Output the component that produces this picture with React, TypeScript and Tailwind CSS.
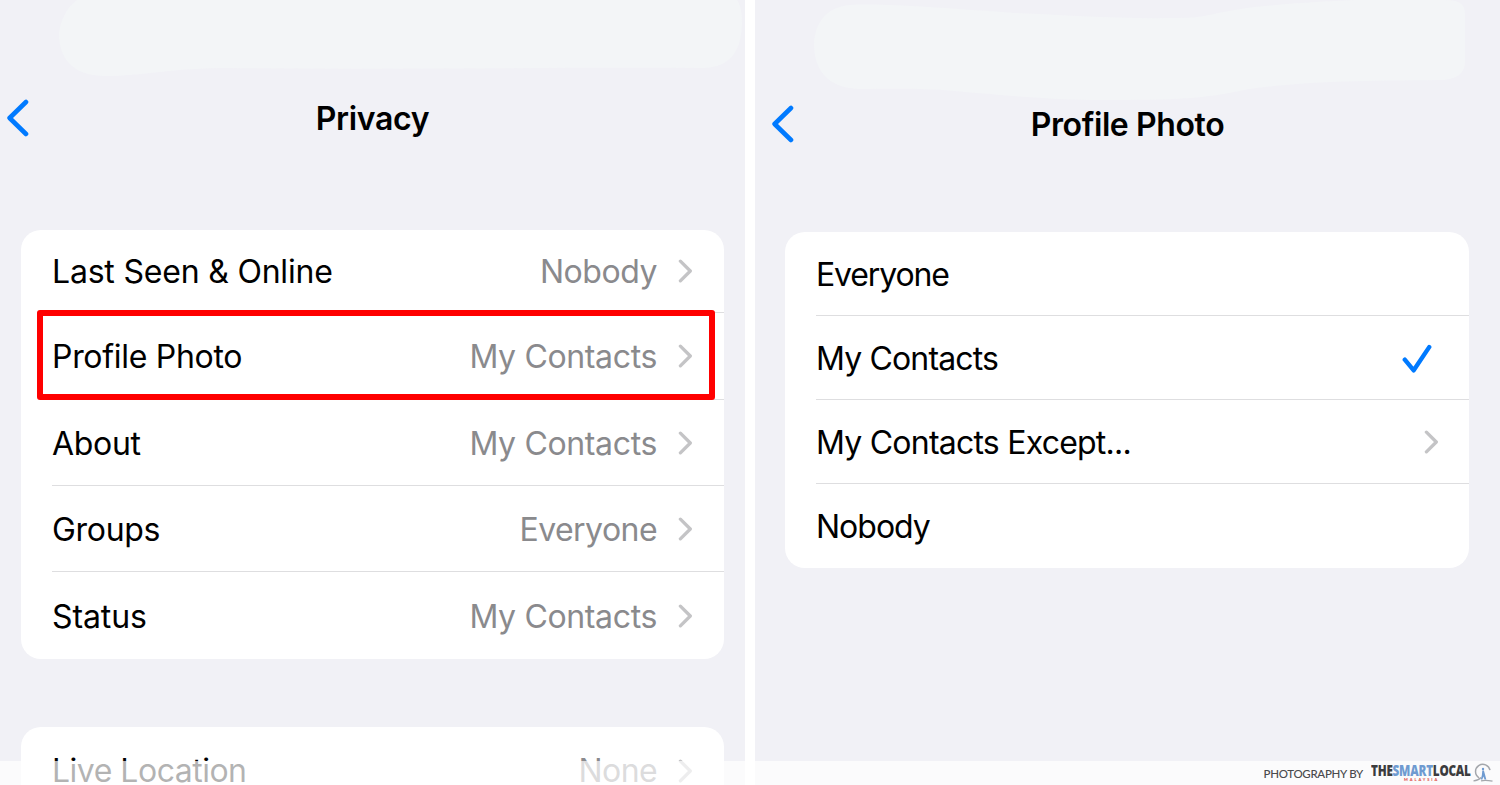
import React from "react";
import { clsx } from "clsx";

const privacyRows = [
    { label: "Last Seen & Online", value: "Nobody", rowClass: "h-[82px]", labelClass: "pt-0.5 tracking-[-0.2px]", valueClass: "pt-0.5 tracking-[-0.45px]" },
    { label: "Profile Photo", value: "My Contacts", rowClass: "h-[87px] border-t", labelClass: "pt-0.5", valueClass: "pt-0.5 tracking-[-0.35px]" },
    { label: "About", value: "My Contacts", rowClass: "h-[86px] border-t", labelClass: "pt-0.5", valueClass: "pt-0.5 tracking-[-0.35px]" },
    { label: "Groups", value: "Everyone", rowClass: "h-[86px] border-t pt-px", labelClass: "pt-0.5", valueClass: "pt-0.5 tracking-[-0.55px]" },
    { label: "Status", value: "My Contacts", rowClass: "h-[88px] border-t", labelClass: "pt-0.5 tracking-[-0.1px]", valueClass: "pt-0.5 tracking-[-0.35px]" },
];

const photoOptions = [
    { label: "Everyone", rowClass: "h-[83px]", labelClass: "pt-0.5 tracking-[-1.15px]" },
    { label: "My Contacts", rowClass: "h-[84px] border-t", labelClass: "pt-0.5 tracking-[-0.85px]", checked: true },
    { label: "My Contacts Except...", rowClass: "h-[84px] border-t", labelClass: "pt-0.5 tracking-[-0.77px]", more: true },
    { label: "Nobody", rowClass: "h-[85px] border-t", labelClass: "pt-0.5 tracking-[-1px]" },
];

function BackIcon() {
    return (
        <svg className="h-[38px] w-6 shrink-0" viewBox="0 0 24 38" fill="none" stroke="#007aff" strokeWidth="4.6" strokeLinecap="round" strokeLinejoin="round">
            <path d="M21 3 4.6 19 21 35" />
        </svg>
    );
}

function Chevron() {
    return (
        <svg className="h-6 w-[15px] shrink-0" viewBox="0 0 15 24" fill="none" stroke="#c4c4c6" strokeWidth="3.3" strokeLinecap="round" strokeLinejoin="round">
            <path d="M2.4 2.2 12.3 12l-9.9 9.8" />
        </svg>
    );
}

function CheckIcon() {
    return (
        <svg className="h-[30px] w-[30px] shrink-0" viewBox="0 0 30 30" fill="none" stroke="#007aff" strokeWidth="4.4" strokeLinecap="round" strokeLinejoin="round">
            <path d="M2.8 16.7 11.7 27.3 27.2 4.1" />
        </svg>
    );
}

type SettingRowProps = {
    label: string;
    value: string;
    rowClass: string;
    labelClass?: string;
    valueClass?: string;
};

function SettingRow({ label, value, rowClass, labelClass, valueClass }: SettingRowProps) {
    return (
        <div className={clsx("ml-[31px] flex items-center border-[#dedee0] pr-[31px]", rowClass)}>
            <span className={clsx("grow text-black", labelClass)}>{label}</span>
            <span className={clsx("mr-[21px] text-[#8a8a8d]", valueClass)}>{value}</span>
            <Chevron />
        </div>
    );
}

function PrivacyScreen() {
    return (
        <section className="relative flex w-[745px] flex-col overflow-hidden bg-[#f1f1f6]">
            {/* Smudge over the status bar */}
            <svg className="absolute top-0 left-0 h-[80px] w-full" viewBox="0 0 745 80">
                <path d="M77 0C66 8 60 22 59 34c0 22 12 42 46 42 38 0 66-8 125-8 160 2 320-1 474 0 24-1 37-14 38-44 0-10-1-18-5-24z" fill="#f3f5f7" />
            </svg>
            <header className="relative flex h-[230px] shrink-0 items-start pt-[99px] pl-[5px]">
                <BackIcon />
                <h1 className="absolute inset-x-0 top-[99px] text-center text-[32px] leading-10 font-semibold tracking-[-0.3px]">Privacy</h1>
            </header>
            <div className="relative mx-[21px] rounded-[20px] bg-white">
                {privacyRows.map((row) => (
                    <SettingRow key={row.label} {...row} />
                ))}
                <div className="absolute top-[80px] left-4 h-[90px] w-[678px] rounded-[3px] border-6 border-[#ff0000]" />
            </div>
            <div className="mx-[21px] mt-[68px] rounded-t-[20px] bg-white">
                <SettingRow label="Live Location" value="None" rowClass="h-[87px]" labelClass="tracking-[-0.5px]" valueClass="tracking-[-0.6px]" />
            </div>
        </section>
    );
}

function ProfilePhotoScreen() {
    return (
        <section className="relative flex w-[745px] flex-col overflow-hidden bg-[#f1f1f6]">
            <svg className="absolute top-0 left-0 h-[105px] w-full" viewBox="0 0 745 105">
                <path d="M95 5C70 7 60 24 59 44c0 26 14 44 45 45 30 0 65-1 95 2 60 5 100 9 150 9 70 0 100-1 145-11 60-8 105-8 190-9 18 0 26-7 26-18V14c0-10-6-14-20-14H600c-60 3-90 5-120 10-30 5-30 8-60 8-60 1-110-3-160-5C200 9 130 3 95 5z" fill="#f3f5f7" />
            </svg>
            <header className="relative flex h-[232px] shrink-0 items-start pt-[105px] pl-[15px]">
                <BackIcon />
                <h1 className="absolute inset-x-0 top-[105px] text-center text-[32px] leading-10 font-semibold tracking-[-0.4px]">Profile Photo</h1>
            </header>
            <div className="mr-[31px] ml-[30px] rounded-[20px] bg-white">
                {photoOptions.map((option) => (
                    <div key={option.label} className={clsx("ml-[31px] flex items-center border-[#dedee0]", option.rowClass)}>
                        <span className={clsx("grow text-black", option.labelClass)}>{option.label}</span>
                        {option.checked && <span className="mr-[37px] flex pt-px"><CheckIcon /></span>}
                        {option.more && <span className="mr-[30px] flex"><Chevron /></span>}
                    </div>
                ))}
            </div>
        </section>
    );
}

function CreditBar() {
    return (
        <footer className="absolute inset-x-0 bottom-0 flex h-6 items-start justify-end bg-white/70 pr-[7px]">
            <span className="mt-[5px] mr-2 font-['Lato',sans-serif] text-[11.5px] leading-4 font-medium tracking-[-0.3px] whitespace-nowrap text-[#4a4a4c]">PHOTOGRAPHY BY</span>
            <div className="mt-[3px] flex w-[99px] flex-col">
                <div className="h-[13px] origin-left scale-x-[0.78] font-['Open_Sans',sans-serif] text-[15px] leading-[13px] font-extrabold tracking-[-0.3px] whitespace-nowrap text-[#3c3c3e]">
                    THE<span className="text-[#6f9bd1]">SMART</span>LOCAL
                </div>
                <div className="pl-[33px] font-['Lato',sans-serif] text-[4px] leading-[5px] font-black tracking-[1.9px] text-[#e0524d]">MALAYSIA</div>
            </div>
            <svg className="mt-[2px] ml-[3px] h-[21px] w-5" viewBox="0 0 20 21" fill="none">
                <path d="M6 14.8A7.3 7.3 0 1 1 17 7.200" stroke="#a4a7ac" strokeWidth="1.5" />
                <path d="M.5 17.8c3.5-.2 5.500-1 7.500-3.300M8 17.800c3-.8 7-.6 11.500.4" stroke="#a4a7ac" strokeWidth="1.2" />
                <path d="M9.300 7.500h1.600l1.100 4 1.300 5h-1.700l-1.300-3-.9 3H7.800l1.100-4.500z" fill="#6f9bd1" />
                <circle cx="10" cy="6" r="1.2" fill="#6f9bd1" />
            </svg>
        </footer>
    );
}

export default function App() {
    return (
        <main className="relative flex h-[785px] w-[1500px] gap-2.5 overflow-hidden bg-white font-['Inter',sans-serif] text-[32px] leading-10 tracking-[-0.3px] text-black">
            <PrivacyScreen />
            <ProfilePhotoScreen />
            <CreditBar />
        </main>
    );
}
